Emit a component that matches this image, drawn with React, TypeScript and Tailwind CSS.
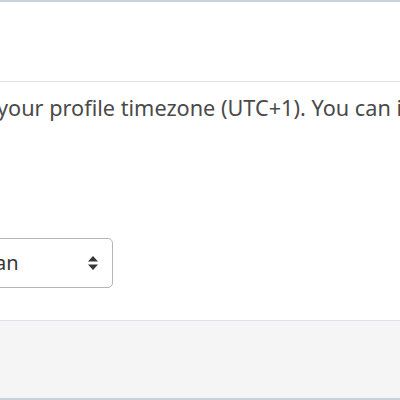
export default function App() {
  return (
    <div
      className="w-[400px] h-[400px] overflow-hidden bg-white flex flex-col text-[#363636]"
      style={{ fontFamily: '"Noto Sans", "Open Sans", sans-serif' }}
    >
      <div className="h-[2px] bg-[#c6d3df] shrink-0" />
      <div className="h-[80px] shrink-0 bg-white border-b border-[#dbe4ee]" />
      <div className="flex-1 flex flex-col overflow-hidden">
        <div className="pt-[11px] ml-[-3px] whitespace-nowrap text-[21.7px] leading-[30px] text-[#4a4a4a]">
          your profile timezone (UTC+1). You can import
        </div>
        <div className="mt-[115px] ml-[-45px] w-[158px] h-[50px] border border-[#b5b5b5] rounded-[5px] flex items-center justify-between pl-[10px] pr-[13px] text-[20px] text-[#363636]">
          <span>Japan</span>
          <svg width="12" height="16" viewBox="0 0 12 16" className="shrink-0">
            <path d="M6 1 L11 6.5 L1 6.5 Z" fill="#363636" />
            <path d="M1 9.5 L11 9.5 L6 15 Z" fill="#363636" />
          </svg>
        </div>
      </div>
      <div className="h-[78px] shrink-0 bg-[#f5f5f5] border-t border-[#dbe4ee]" />
      <div className="h-[2px] bg-[#c6d3df] shrink-0" />
    </div>
  );
}
